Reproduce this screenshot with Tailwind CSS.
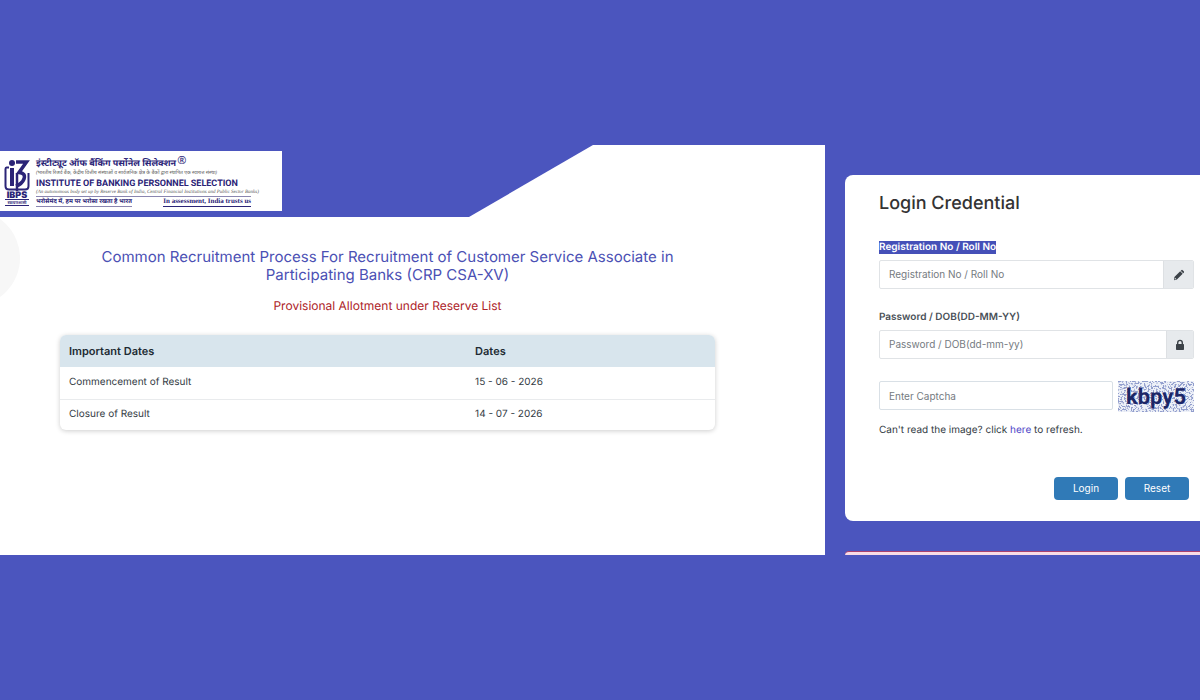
<!DOCTYPE html>
<html lang="en">
<head>
    <meta charset="UTF-8">
    <meta name="viewport" content="width=device-width, initial-scale=1.0">
    <title>IBPS - Login</title>
    <script src="https://cdn.jsdelivr.net/npm/@tailwindcss/browser@4"></script>
</head>
<body class="bg-[#4b55be] min-h-screen flex items-center font-['Inter',sans-serif] text-[10px] text-[#333b44] overflow-x-hidden [text-rendering:geometricPrecision]">

    <main class="w-full grid grid-cols-[11fr_5fr]">

        <!-- Notice -->
        <section class="bg-white overflow-hidden">
            <header class="bg-[#4b55be] h-[72px] py-[6px] [clip-path:polygon(0_0,593px_0,469px_100%,0_100%)]">
                <div class="bg-white w-[282px] h-[60px] flex gap-[6px] pl-1 text-[#2b2477]">
                    <svg class="w-[26px] h-[60px] shrink-0" viewBox="0 0 26 60" fill="none" stroke="#2b2477">
                        <circle cx="8" cy="12" r="3" fill="#2b2477" stroke="none"/>
                        <path d="M5 16.500H2.500Q1.500 16.500 1.500 18V35Q1.500 38.500 5 38.500H21Q24.500 38.500 24.500 35V22" stroke-width="2"/>
                        <path d="M8 17V35" stroke-width="4"/>
                        <path d="M12 11H22.500L15 21.500Q22 22 20 28Q18 33 12 35" stroke-width="3.500"/>
                        <path d="M13 22V40" stroke-width="2.500"/>
                        <text x="13" y="47" text-anchor="middle" font-family="Inter, sans-serif" font-size="9" font-weight="900" fill="#2b2477" stroke="none">IBPS</text>
                        <path d="M1 48.500H25M1 54.500H25" stroke-width="1"/>
                        <text x="13" y="53" text-anchor="middle" font-family="Noto Sans, sans-serif" font-size="4" font-weight="700" fill="#2b2477" stroke="none">स्वायत्तशासी</text>
                    </svg>
                    <div class="w-[215px] pt-[5px] whitespace-nowrap font-['Noto_Sans',sans-serif]">
                        <p class="flex gap-px text-[9px] leading-[13px] font-bold">इंस्टीट्यूट ऑफ बैंकिंग पर्सोनेल सिलेक्शन<span class="text-[11px] leading-[9px] font-normal">®</span></p>
                        <p class="text-[5px] leading-[9px] italic text-[#555]">(भारतीय रिजर्व बैंक, केंद्रीय वित्तीय संस्थाओं व सार्वजनिक क्षेत्र के बैंकों द्वारा स्थापित एक स्वायत्त संस्था)</p>
                        <p class="text-[9px] leading-[12px] font-bold font-['Roboto',sans-serif]">INSTITUTE OF BANKING PERSONNEL SELECTION</p>
                        <p class="text-[5px] leading-[6px] italic text-[#555] font-['Liberation_Serif',serif]">(An autonomous body set up by Reserve Bank of India, Central Financial Institutions and Public Sector Banks)</p>
                        <div class="flex justify-between text-[6px] leading-[9px] font-bold border-t border-[#8a86b0]">
                            <span class="border-b border-[#8a86b0]">भरोसेमंद में, हम पर भरोसा रखता है भारत</span>
                            <span class="text-[7px] border-b border-[#2b2477] font-['Liberation_Serif',serif]">In assessment, India trusts us</span>
                        </div>
                    </div>
                </div>
            </header>

            <div class="relative overflow-hidden px-15 pt-[31px] pb-6">
                <div class="absolute -left-[76px] -top-[7px] size-24 rounded-full bg-[#f7f7f7]"></div>
                <div class="relative mr-[50px]">
                    <h1 class="text-[15px] leading-[18px] text-center text-[#4b50b4]">Common Recruitment Process For Recruitment of Customer Service Associate in<br>Participating Banks (CRP CSA-XV)</h1>
                    <h2 class="mt-3 text-xs leading-5 text-center text-[#ad2328]">Provisional Allotment under Reserve List</h2>

                    <table class="mt-[19px] w-full text-left rounded-md overflow-hidden shadow-[0_1px_5px_rgba(0,0,0,0.2)]">
                        <thead class="bg-[#d8e5ed] text-[11px] text-[#212b33]">
                            <tr>
                                <th class="w-[62%] h-8 px-[9px] font-semibold">Important Dates</th>
                                <th class="px-[9px] font-semibold">Dates</th>
                            </tr>
                        </thead>
                        <tbody>
                            <tr class="border-b border-[#e9ebed]">
                                <td class="h-8 px-[9px]">Commencement of Result</td>
                                <td class="px-[9px]">15 - 06 - 2026</td>
                            </tr>
                            <tr>
                                <td class="h-[31px] px-[9px]">Closure of Result</td>
                                <td class="px-[9px]">14 - 07 - 2026</td>
                            </tr>
                        </tbody>
                    </table>
                </div>
            </div>
        </section>

        <!-- Login -->
        <aside class="pl-5 pt-[30px]">
            <form class="bg-white rounded-l-lg pl-[34px] pr-[6px] pt-[17px] pb-[21px]">
                <h2 class="text-lg leading-6 font-medium text-[#333]">Login Credential</h2>

                <div class="mt-[25px] flex">
                    <label for="regNo" class="leading-[13px] font-semibold bg-[#4550b8] text-white">Registration No / Roll No</label>
                </div>
                <div class="mt-[6px] flex h-[29px] border border-[#e0e3e6] rounded-xs overflow-hidden">
                    <input id="regNo" type="text" placeholder="Registration No / Roll No" class="min-w-0 flex-1 px-[9px] placeholder:text-[#757b81] focus:outline-none">
                    <span class="w-[30px] bg-[#e7eaed] border-l border-[#dde0e3] flex items-center justify-center">
                        <svg class="size-3" viewBox="0 0 12 12" fill="#3c4248">
                            <path d="M8.300 1.200Q9 .5 9.700 1.200L10.800 2.300Q11.500 3 10.800 3.700L10.200 4.300L7.700 1.800ZM7.200 2.300L9.700 4.800L3.900 10.600L1 11.300L1.400 8.100Z"/>
                            <path d="M2 8.800L3.300 10.100L1.700 10.500Z" fill="#e7eaed"/>
                        </svg>
                    </span>
                </div>

                <div class="mt-[22px] flex">
                    <label for="password" class="leading-[13px] font-semibold text-[#495057]">Password / DOB(DD-MM-YY)</label>
                </div>
                <div class="mt-[6px] flex h-[29px] border border-[#e0e3e6] rounded-xs overflow-hidden">
                    <input id="password" type="password" placeholder="Password / DOB(dd-mm-yy)" class="min-w-0 flex-1 px-[9px] placeholder:text-[#757b81] focus:outline-none">
                    <span class="w-[27px] bg-[#e7eaed] border-l border-[#dde0e3] flex items-center justify-center">
                        <svg class="size-3" viewBox="0 0 12 12">
                            <rect x="2" y="5" width="8" height="6" rx=".7" fill="#3c4248"/>
                            <path d="M3.700 5.500V3.700a2.300 2.300 0 0 1 4.600 0V5.500" fill="none" stroke="#3c4248" stroke-width="1.400"/>
                        </svg>
                    </span>
                </div>

                <div class="mt-[22px] flex gap-[5px]">
                    <input id="captcha" type="text" aria-label="Enter Captcha" placeholder="Enter Captcha" class="min-w-0 flex-1 h-[29px] px-[9px] border border-[#d9e0e6] rounded-xs placeholder:text-[#757b81] focus:outline-none">
                    <svg class="w-[76px] h-[31px]" viewBox="0 0 76 31" role="img" aria-label="Captcha">
                        <filter id="noise" x="0" y="0" width="100%" height="100%">
                            <feTurbulence type="fractalNoise" baseFrequency="0.6" numOctaves="2" seed="5"/>
                            <feColorMatrix values="0 0 0 0 0.150  0 0 0 0 0.200  0 0 0 0 0.500  9 0 0 0 -4.400"/>
                        </filter>
                        <rect width="76" height="31" fill="#eef1f8"/>
                        <rect width="76" height="31" filter="url(#noise)" opacity=".7"/>
                        <text x="38" y="23" text-anchor="middle" font-family="Roboto, sans-serif" font-size="22" font-weight="700" fill="#1c2768">kbpy5</text>
                    </svg>
                </div>

                <p class="mt-[10px] leading-4">Can't read the image? click <a href="#" class="text-[#4f46c8]">here</a> to refresh.</p>

                <div class="mt-[39px] pr-[5px] flex justify-end gap-[7px] text-white">
                    <button type="submit" class="w-16 h-[23px] rounded-sm bg-[#307ab7] hover:bg-[#28699e]">Login</button>
                    <button type="reset" class="w-16 h-[23px] rounded-sm bg-[#307ab7] hover:bg-[#28699e]">Reset</button>
                </div>
            </form>

            <div class="mt-[30px] h-1 rounded-tl-md border-t border-[#a8406f] bg-[#f8dbe6]"></div>
        </aside>
    </main>

</body>
</html>
